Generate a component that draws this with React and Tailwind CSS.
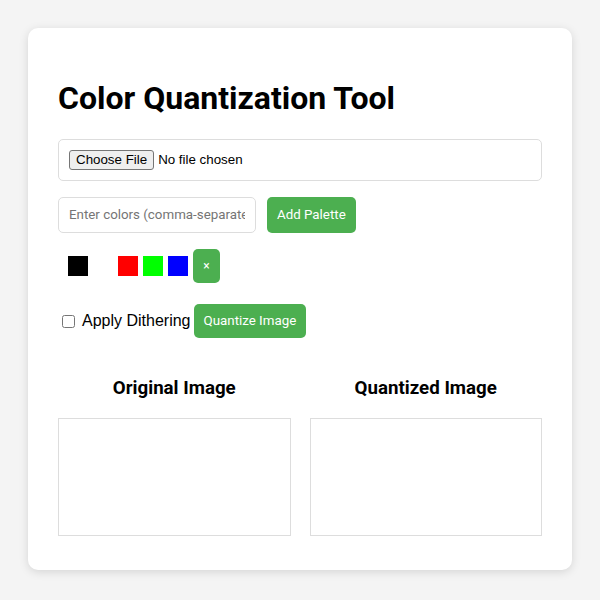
import React from "react";

const swatches = ["#000000", "#ffffff", "#ff0000", "#00ff00", "#0000ff"];

const App = () => {
  return (
    <div className="min-h-screen bg-[#f4f4f4] p-[28px] font-['Roboto',sans-serif] text-black">
      <div className="bg-white rounded-[10px] shadow-[0_2px_10px_rgba(0,0,0,0.13)] px-[30px] pt-[30px] pb-[34px]">
        <h1 className="text-[32px] leading-[37px] font-bold mt-[22px] mb-[22px]">
          Color Quantization Tool
        </h1>

        <div className="h-[42px] border border-[#ddd] rounded-[5px] px-[10px] flex items-center mb-[16px]">
          <input
            type="file"
            className="font-['Liberation_Sans',Arial,sans-serif] text-[13.33px] leading-[16px] file:bg-[#efefef] file:border file:border-[#767676] file:rounded-[3px] file:px-[6px] file:py-[1px] file:mr-[4px] file:text-black"
          />
        </div>

        <div className="flex gap-[11px] h-[36px] mb-[16px]">
          <input
            type="text"
            placeholder="Enter colors (comma-separated hex)"
            className="w-[198px] border border-[#ddd] rounded-[5px] px-[10px] text-[13.33px] placeholder:text-[#757575] outline-none"
          />
          <button className="bg-[#4caf50] text-white rounded-[5px] px-[10px] text-[13.33px]">
            Add Palette
          </button>
        </div>

        <div className="flex items-center gap-[5px] pl-[10px] h-[34px] mb-[21px]">
          {swatches.map((c) => (
            <div key={c} className="w-[20px] h-[20px]" style={{ backgroundColor: c }} />
          ))}
          <button className="bg-[#4caf50] text-white rounded-[5px] w-[27px] h-[34px] text-[12px] leading-none">
            ×
          </button>
        </div>

        <div className="flex items-center h-[34px]">
          <input type="checkbox" className="w-[13px] h-[13px] ml-[4px] mr-[7px]" />
          <span className="font-['Liberation_Sans',Arial,sans-serif] text-[16px] mr-[3px]">
            Apply Dithering
          </span>
          <button className="bg-[#4caf50] text-white rounded-[5px] px-[10px] h-[34px] text-[13.33px]">
            Quantize Image
          </button>
        </div>

        <div className="grid grid-cols-2 gap-[19px] mt-[39px]">
          <div>
            <h3 className="text-[18.72px] leading-[23px] font-bold text-center mb-[18px]">
              Original Image
            </h3>
            <div className="h-[118px] border border-[#ddd]" />
          </div>
          <div>
            <h3 className="text-[18.72px] leading-[23px] font-bold text-center mb-[18px]">
              Quantized Image
            </h3>
            <div className="h-[118px] border border-[#ddd]" />
          </div>
        </div>
      </div>
    </div>
  );
};

export default App;
